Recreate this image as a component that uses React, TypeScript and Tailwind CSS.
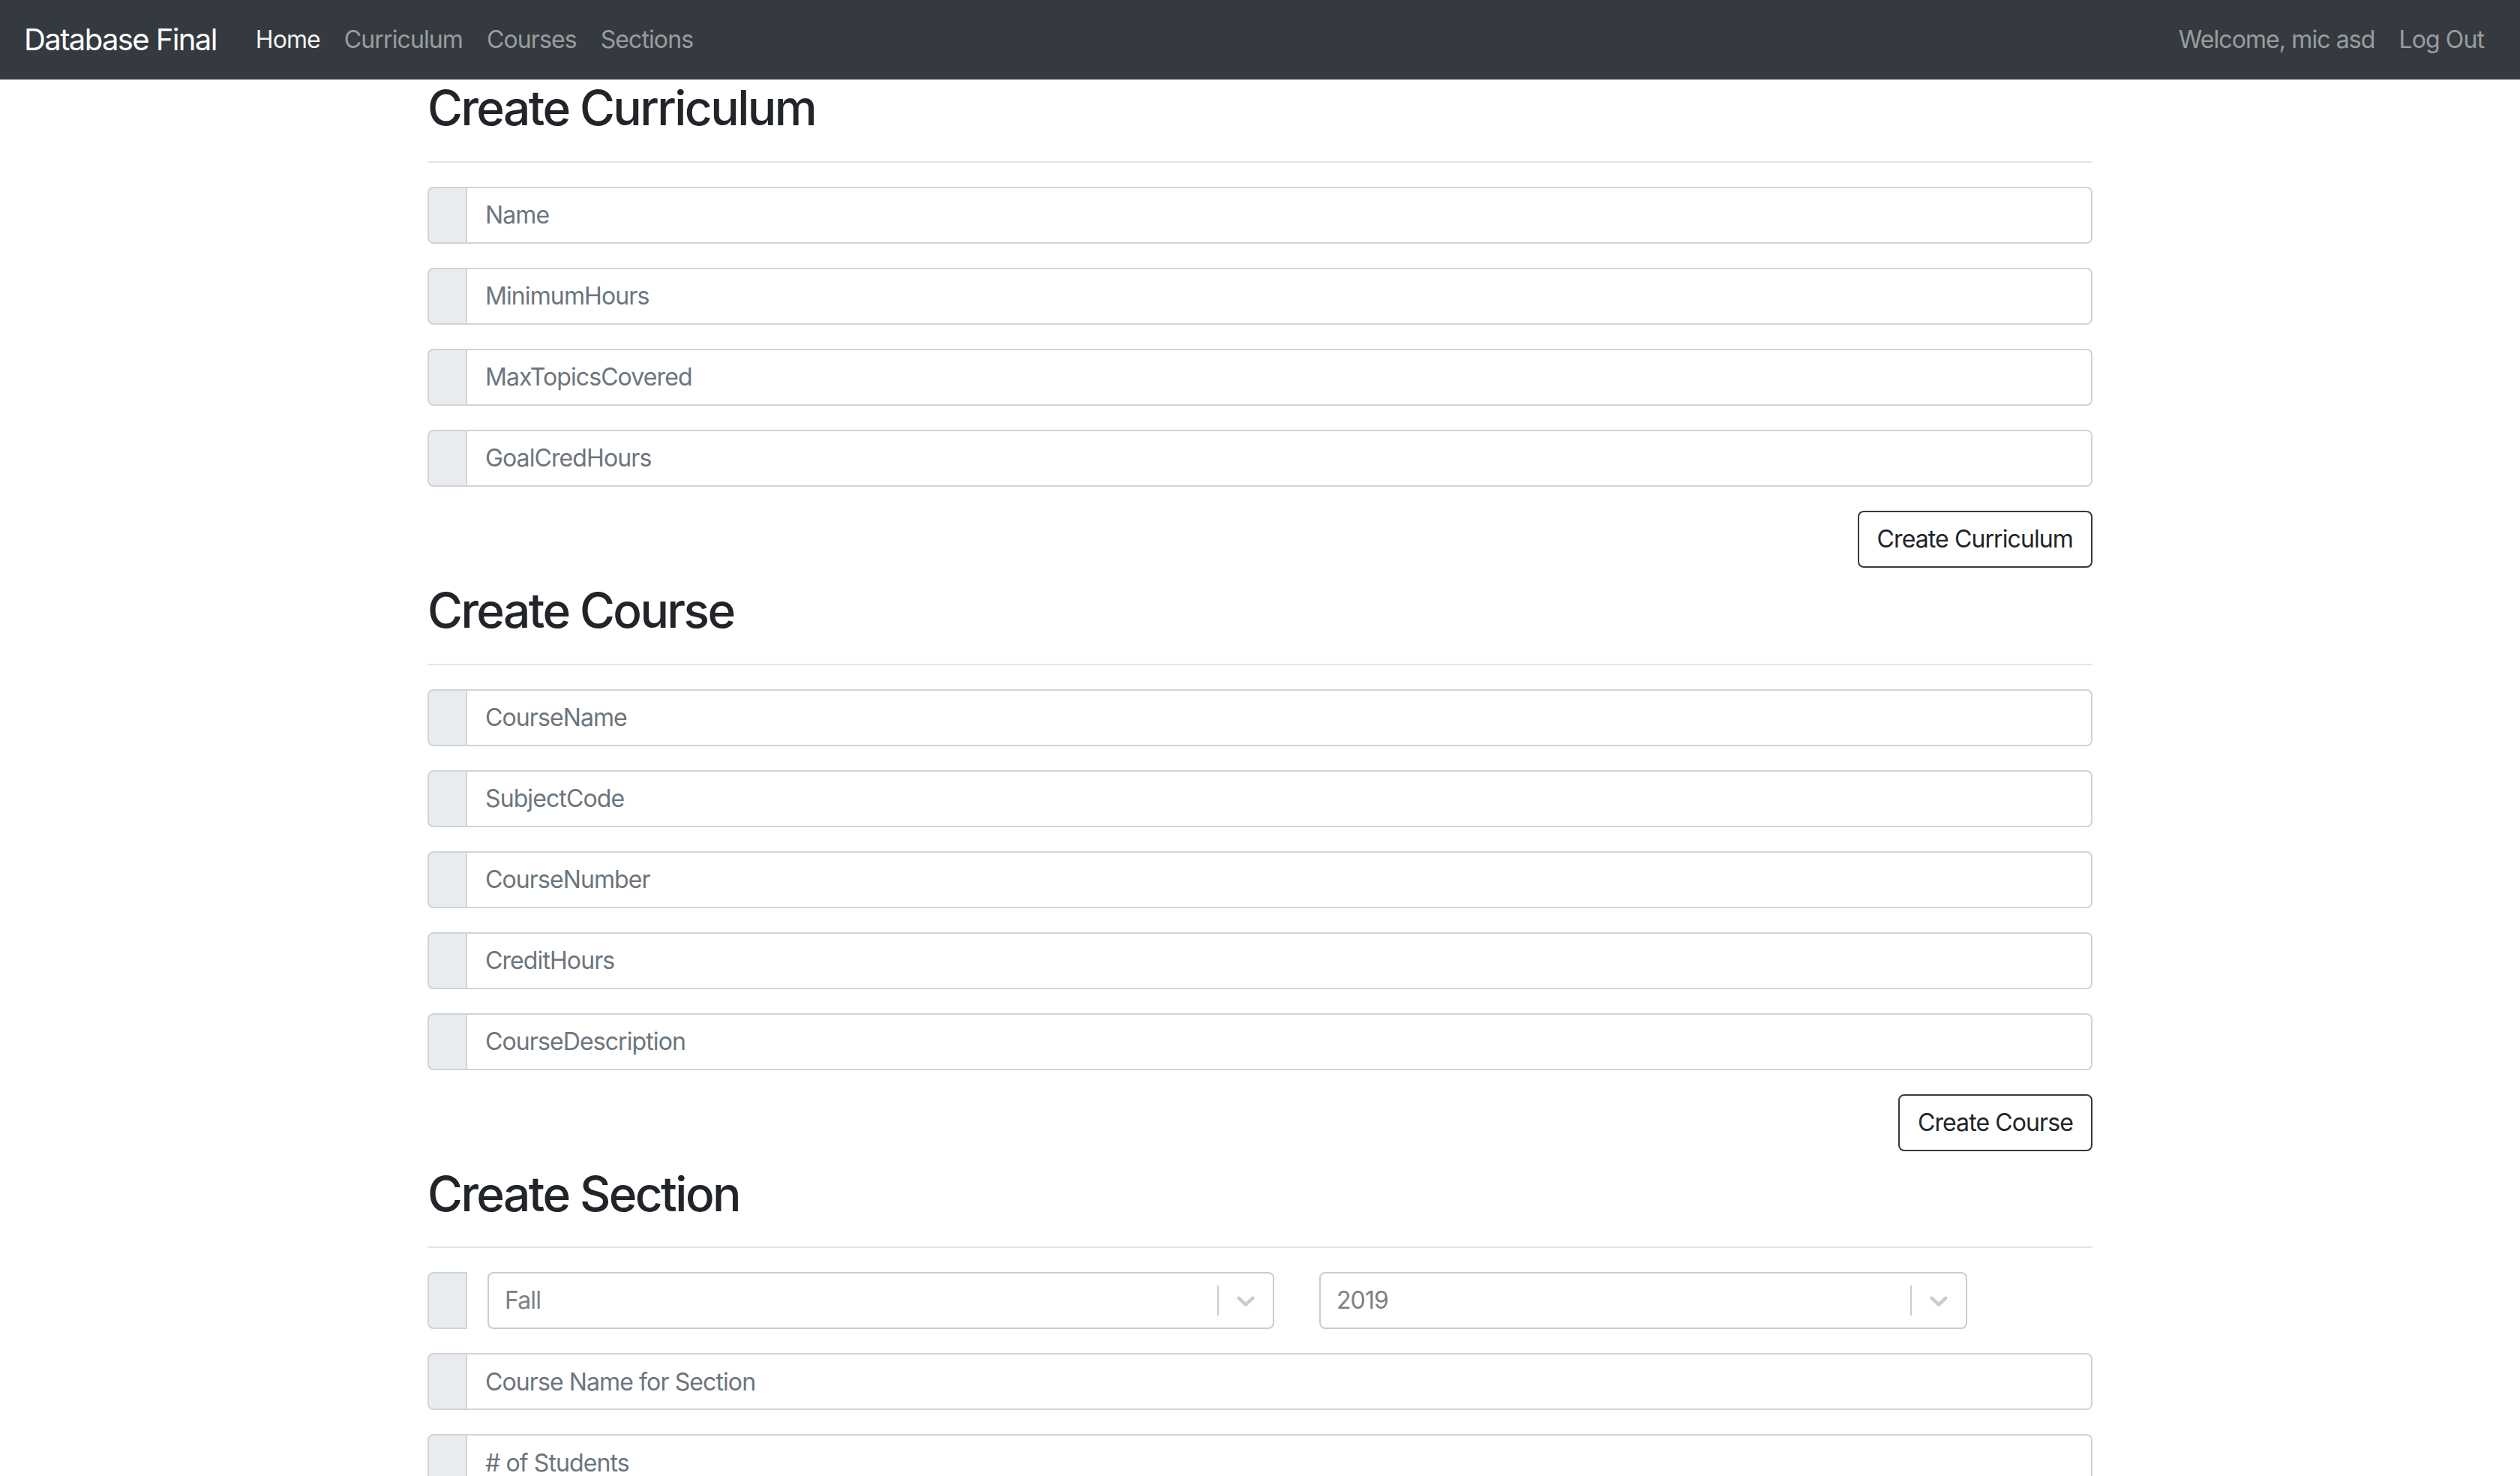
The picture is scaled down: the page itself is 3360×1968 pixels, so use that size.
import React from 'react';

const FONT = "font-['Inter','Liberation_Sans',sans-serif]";

const CURRICULUM = ['Name', 'MinimumHours', 'MaxTopicsCovered', 'GoalCredHours'];
const COURSE = ['CourseName', 'SubjectCode', 'CourseNumber', 'CreditHours', 'CourseDescription'];

const Prepend = () => (
  <div className="w-[53px] h-full shrink-0 bg-[#e9ecef] border-2 border-[#ced4da] rounded-l-[8px]" />
);

const Field = ({ placeholder }: { placeholder: string }) => (
  <div className="flex h-[76px] mb-[32px]">
    <Prepend />
    <input
      placeholder={placeholder}
      className="flex-1 min-w-0 h-full border-2 border-l-0 border-[#ced4da] rounded-r-[8px] pl-[24px] pr-[24px] text-[32px] tracking-[-0.028em] text-[#495057] placeholder:text-[#6c757d] outline-none bg-white"
    />
  </div>
);

const Chevron = () => (
  <svg viewBox="0 0 20 20" className="w-[40px] h-[40px] fill-[#cccccc]">
    <path d="M4.516 7.548c0.436-0.446 1.043-0.481 1.576 0l3.908 3.747 3.908-3.747c0.533-0.481 1.141-0.446 1.574 0 0.436 0.445 0.408 1.197 0 1.615-0.406 0.418-4.695 4.502-4.695 4.502-0.217 0.223-0.502 0.335-0.787 0.335s-0.57-0.112-0.789-0.335c0 0-4.287-4.084-4.695-4.502s-0.436-1.17 0-1.615z" />
  </svg>
);

const Select = ({ value, width }: { value: string; width: string }) => (
  <div className={`${width} h-[76px] shrink-0 flex items-center border-2 border-[#cccccc] rounded-[8px] bg-white`}>
    <div className="flex-1 pl-[21px] text-[32px] tracking-[-0.028em] text-[#808080]">{value}</div>
    <div className="w-[2px] h-[40px] bg-[#cccccc]" />
    <div className="px-[16px] flex items-center">
      <Chevron />
    </div>
  </div>
);

const Section = ({ title, children }: { title: string; children: React.ReactNode }) => (
  <div>
    <h2 className="text-[64px] leading-[1.2] font-medium tracking-[-0.04em] text-[#212529]">{title}</h2>
    <hr className="mt-[32px] mb-[32px] border-0 border-t-2 border-[rgba(0,0,0,0.1)]" />
    {children}
  </div>
);

const SubmitButton = ({ label }: { label: string }) => (
  <div className="flex justify-end mb-[19px]">
    <button className="h-[76px] px-[24px] border-2 border-[#343a40] rounded-[8px] text-[32px] tracking-[-0.028em] text-[#212529] bg-white">
      {label}
    </button>
  </div>
);

const NavLink = ({ label, active }: { label: string; active?: boolean }) => (
  <a
    className={
      active
        ? 'px-[16px] text-[32px] tracking-[-0.028em] text-[rgba(255,255,255,0.95)]'
        : 'px-[16px] text-[32px] tracking-[-0.028em] text-[rgba(255,255,255,0.5)]'
    }
  >
    {label}
  </a>
);

export default function App() {
  return (
    <div className={`${FONT} min-h-screen bg-white`}>
      <nav className="h-[106px] bg-[#343a40] flex items-center px-[32px]">
        <span className="text-[40px] tracking-[-0.04em] text-white mr-[36px]">Database Final</span>
        <NavLink label="Home" active />
        <NavLink label="Curriculum" />
        <NavLink label="Courses" />
        <NavLink label="Sections" />
        <div className="ml-auto flex">
          <NavLink label="Welcome, mic asd" />
          <NavLink label="Log Out" />
        </div>
      </nav>

      <main className="w-[2220px] mx-auto">
        <Section title="Create Curriculum">
          {CURRICULUM.map((p) => (
            <Field key={p} placeholder={p} />
          ))}
          <SubmitButton label="Create Curriculum" />
        </Section>

        <Section title="Create Course">
          {COURSE.map((p) => (
            <Field key={p} placeholder={p} />
          ))}
          <SubmitButton label="Create Course" />
        </Section>

        <Section title="Create Section">
          <div className="flex items-center h-[76px] mb-[32px]">
            <Prepend />
            <div className="ml-[27px]">
              <Select value="Fall" width="w-[1049px]" />
            </div>
            <div className="ml-[60px]">
              <Select value="2019" width="w-[864px]" />
            </div>
          </div>
          <Field placeholder="Course Name for Section" />
          <Field placeholder="# of Students" />
          <SubmitButton label="Create Section" />
        </Section>
      </main>
    </div>
  );
}
